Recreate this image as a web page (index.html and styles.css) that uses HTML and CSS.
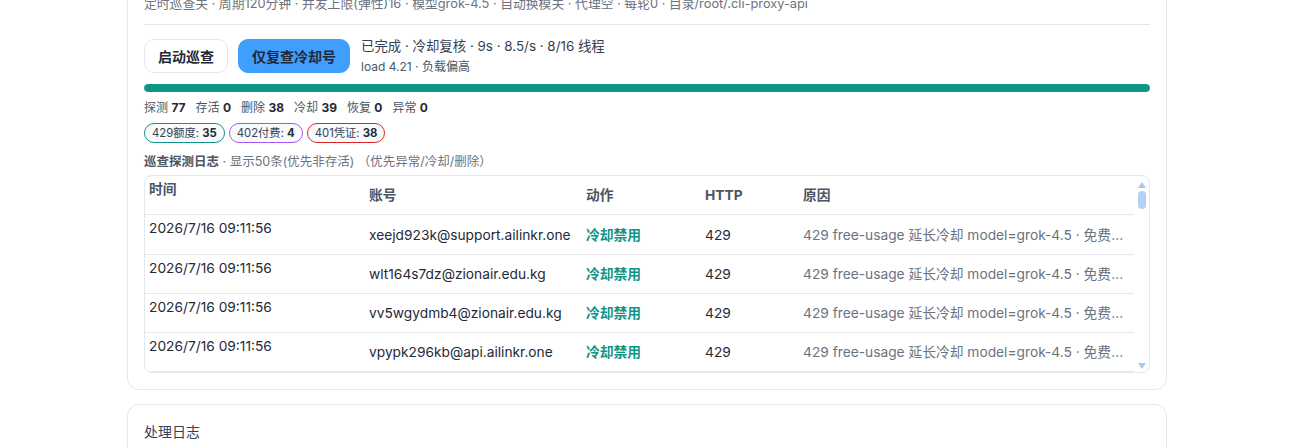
FILE: index.html
```html
<!DOCTYPE html>
<html lang="zh-CN">
<head>
<meta charset="utf-8">
<title>巡查</title>
<link rel="stylesheet" href="styles.css">
</head>
<body>
<div class="page">
  <section class="card card-main">
    <div class="meta">定时巡查关 · 周期120分钟 · 并发上限(弹性)16 · 模型grok-4.5 · 自动换模关 · 代理空 · 每轮0 · 目录/root/.cli-proxy-api</div>
    <div class="actions">
      <button class="btn btn-plain">启动巡查</button>
      <button class="btn btn-primary">仅复查冷却号</button>
      <div class="status">
        <div class="status-main">已完成 · 冷却复核 · 9s · 8.5/s · 8/16 线程</div>
        <div class="status-sub">load 4.21 · 负载偏高</div>
      </div>
    </div>
    <div class="progress"><div class="progress-fill" style="width:100%"></div></div>
    <div class="stats">
      <span>探测 <b>77</b></span>
      <span>存活 <b>0</b></span>
      <span>删除 <b>38</b></span>
      <span>冷却 <b>39</b></span>
      <span>恢复 <b>0</b></span>
      <span>异常 <b>0</b></span>
    </div>
    <div class="pills">
      <span class="pill pill-teal">429额度: <b>35</b></span>
      <span class="pill pill-purple">402付费: <b>4</b></span>
      <span class="pill pill-red">401凭证: <b>38</b></span>
    </div>
    <div class="log-title"><b>巡查探测日志</b> · 显示50条(优先非存活) （优先异常/冷却/删除）</div>
    <div class="table-box">
      <div class="table-scroll">
        <table class="log-table">
          <colgroup>
            <col class="c-time"><col class="c-acct"><col class="c-act"><col class="c-http"><col>
          </colgroup>
          <thead>
            <tr><th class="t-time">时间</th><th>账号</th><th>动作</th><th>HTTP</th><th>原因</th></tr>
          </thead>
          <tbody>
            <tr class="first"><td class="t-time">2026/7/16 09:11:56</td><td>xeejd923k@support.ailinkr.one</td><td class="act">冷却禁用</td><td>429</td><td class="reason">429 free-usage 延长冷却 model=grok-4.5 · 免费额度已用尽</td></tr>
            <tr><td class="t-time">2026/7/16 09:11:56</td><td>wlt164s7dz@zionair.edu.kg</td><td class="act">冷却禁用</td><td>429</td><td class="reason">429 free-usage 延长冷却 model=grok-4.5 · 免费额度已用尽</td></tr>
            <tr><td class="t-time">2026/7/16 09:11:56</td><td>vv5wgydmb4@zionair.edu.kg</td><td class="act">冷却禁用</td><td>429</td><td class="reason">429 free-usage 延长冷却 model=grok-4.5 · 免费额度已用尽</td></tr>
            <tr><td class="t-time">2026/7/16 09:11:56</td><td>vpypk296kb@api.ailinkr.one</td><td class="act">冷却禁用</td><td>429</td><td class="reason">429 free-usage 延长冷却 model=grok-4.5 · 免费额度已用尽</td></tr>
            <tr><td class="t-time">2026/7/16 09:11:55</td><td>qz81mdk2@support.ailinkr.one</td><td class="act">冷却禁用</td><td>429</td><td class="reason">429 free-usage 延长冷却 model=grok-4.5 · 免费额度已用尽</td></tr>
          </tbody>
        </table>
      </div>
      <div class="sbar">
        <span class="sb-up"></span>
        <span class="sb-thumb"></span>
        <span class="sb-space"></span>
        <span class="sb-down"></span>
      </div>
    </div>
  </section>
  <section class="card card-log">
    <div class="log-head">处理日志</div>
    <div class="log-sub">按时间倒序展示巡查处理记录，最多保留 200 条，可在此查看每次处理详情</div>
  </section>
</div>
</body>
</html>
```

FILE: styles.css
```css
* { box-sizing: border-box; }
html, body { margin: 0; padding: 0; background: #ffffff; }
body {
  font-family: "Inter", "Noto Sans CJK SC", sans-serif;
  color: #1f2937;
  overflow: hidden;
  height: 447px;
}
.page {
  width: 1040px;
  margin: -22px 0 0 127px;
}
.card {
  background: #fff;
  border: 1px solid #e5e7eb;
  border-radius: 12px;
  padding: 16px 16px 16px 16px;
}
.meta {
  font-size: 12.8px;
  line-height: 18px;
  color: #6b7280;
  padding-bottom: 11px;
  border-bottom: 1px solid #e5e7eb;
  white-space: nowrap;
}
.actions {
  display: flex;
  align-items: flex-start;
  margin-top: 14px;
  gap: 10px;
}
.btn {
  font-family: inherit;
  font-size: 14px;
  font-weight: 700;
  height: 34px;
  border-radius: 10px;
  padding: 0 13px;
  color: #1f2937;
  cursor: pointer;
}
.btn-plain {
  background: #fff;
  border: 1px solid #e5e7eb;
}
.btn-primary {
  background: #409eff;
  border: 1px solid #409eff;
}
.status { margin-left: 1px; margin-top: -3px; }
.status-main { font-size: 13.4px; line-height: 20px; color: #374151; }
.status-sub { font-size: 12px; line-height: 18px; color: #4b5563; margin-top: 2px; }
.progress {
  margin-top: 8px;
  height: 8px;
  border-radius: 4px;
  background: #e5e7eb;
  overflow: hidden;
}
.progress-fill { height: 100%; background: #0f9488; border-radius: 4px; }
.stats {
  margin-top: 7px;
  font-size: 12px;
  line-height: 18px;
  color: #4b5563;
  display: flex;
  gap: 10px;
}
.stats b { color: #1f2937; font-weight: 700; }
.pills { display: flex; gap: 4px; margin-top: 6px; }
.pill {
  font-size: 11.3px;
  line-height: 18px;
  height: 20px;
  padding: 0 7px;
  border-radius: 10px;
  border: 1px solid;
  background: #f8fafc;
  color: #374151;
}
.pill b { font-weight: 700; color: #1f2937; }
.pill-teal { border-color: #0f9488; }
.pill-purple { border-color: #a855f7; }
.pill-red { border-color: #dc2626; }
.log-title {
  margin-top: 10px;
  font-size: 12.5px;
  line-height: 18px;
  color: #6b7280;
}
.log-title b { color: #4b5563; font-weight: 700; }
.table-box {
  margin-top: 4px;
  height: 198px;
  border: 1px solid #e2e8f0;
  border-radius: 8px;
  display: flex;
  overflow: hidden;
}
.table-scroll { flex: 1; overflow: hidden; }
.log-table {
  width: 100%;
  table-layout: fixed;
  border-collapse: collapse;
  font-size: 13.75px;
}
.c-time { width: 224px; }
.c-acct { width: 217px; }
.c-act { width: 119px; }
.c-http { width: 98px; }
.log-table th {
  text-align: left;
  font-weight: 700;
  color: #4b5563;
  line-height: 20px;
  padding: 9px 10px 9px 0;
  border-bottom: 1px solid #e5e7eb;
  vertical-align: middle;
}
.log-table td {
  line-height: 20px;
  padding: 9px 10px 9px 0;
  border-bottom: 1px solid #e5e7eb;
  white-space: nowrap;
  overflow: hidden;
  text-overflow: ellipsis;
  vertical-align: middle;
  color: #1f2937;
}
.log-table tr.first td { padding-top: 10px; }
.log-table th.t-time {
  padding-left: 4px;
  vertical-align: top;
  padding-top: 3px;
}
.log-table td.t-time,
.log-table tr.first td.t-time {
  padding-left: 4px;
  vertical-align: top;
  padding-top: 3px;
}
.log-table td.act { color: #0f9488; font-weight: 700; }
.log-table td.reason { color: #6b7280; }
.sbar {
  width: 15px;
  display: flex;
  flex-direction: column;
  align-items: center;
  padding: 4px 0 3px;
}
.sb-up, .sb-down {
  width: 0; height: 0;
  border-left: 4px solid transparent;
  border-right: 4px solid transparent;
}
.sb-up { border-bottom: 6px solid #a9c8ee; margin-top: 2px; }
.sb-down { border-top: 6px solid #a9c8ee; }
.sb-thumb {
  width: 8px;
  height: 18px;
  border-radius: 4px;
  background: #b3d1f5;
  margin-top: 3px;
}
.sb-space { flex: 1; }
.card-log { margin-top: 14px; height: 120px; }
.log-head { font-size: 14px; line-height: 22px; color: #374151; }
.log-sub { font-size: 12px; line-height: 18px; color: #9ca3af; margin-top: 2px; }
```
